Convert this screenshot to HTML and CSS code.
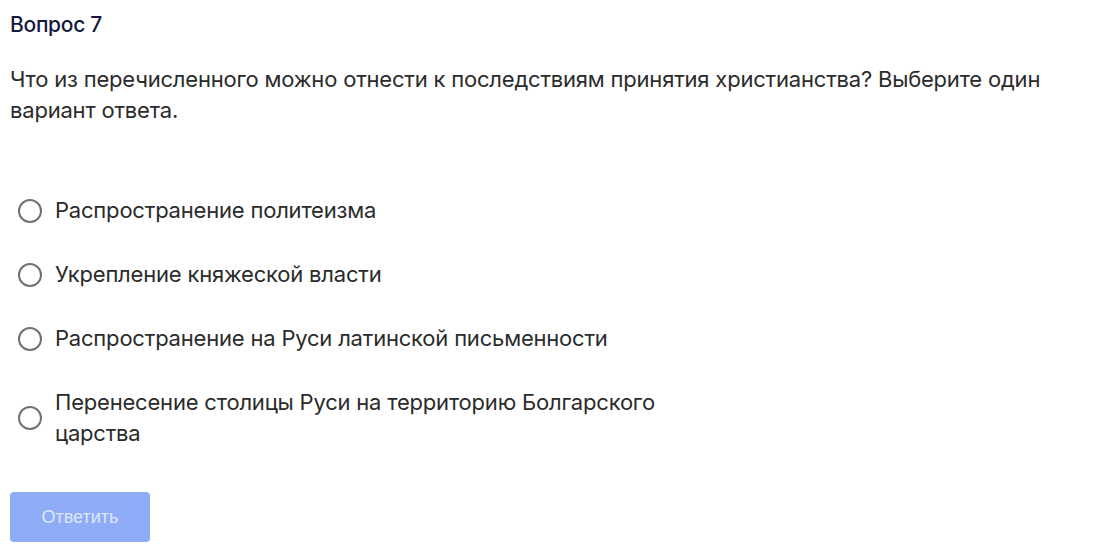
FILE: index.html
```html
<!DOCTYPE html>
<html lang="ru">
<head>
  <meta charset="UTF-8" />
  <title>Вопрос 7</title>
  <link rel="stylesheet" href="styles.css">
</head>
<body>
  <div class="quiz">
    <h3 class="quiz-title">Вопрос 7</h3>
    <p class="quiz-text">Что из перечисленного можно отнести к последствиям принятия христианства? Выберите один вариант ответа.</p>

    <form class="options">
      <label class="option">
        <input type="radio" name="answer" />
        <span class="radio"></span>
        <span class="option-text">Распространение политеизма</span>
      </label>
      <label class="option">
        <input type="radio" name="answer" />
        <span class="radio"></span>
        <span class="option-text">Укрепление княжеской власти</span>
      </label>
      <label class="option">
        <input type="radio" name="answer" />
        <span class="radio"></span>
        <span class="option-text">Распространение на Руси латинской письменности</span>
      </label>
      <label class="option">
        <input type="radio" name="answer" />
        <span class="radio"></span>
        <span class="option-text">Перенесение столицы Руси на территорию Болгарского царства</span>
      </label>
    </form>

    <button class="submit" disabled>Ответить</button>
  </div>
</body>
</html>
```

FILE: styles.css
```css
body {
  margin: 0;
  padding: 0;
  background: #fff;
  font-family: Inter, "Noto Sans", sans-serif;
  color: #2b2b2b;
}

.quiz {
  padding: 12px 10px;
}

.quiz-title {
  margin: 0;
  font-size: 21px;
  font-weight: 500;
  line-height: 26px;
  color: #15193a;
  letter-spacing: -0.3px;
}

.quiz-text {
  margin: 26px 0 0;
  font-size: 22px;
  line-height: 31px;
  letter-spacing: -0.2px;
  color: #2b2b2b;
}

.options {
  margin-top: 69px;
  display: flex;
  flex-direction: column;
  gap: 33px;
}

.option {
  display: flex;
  align-items: center;
  gap: 13px;
  padding-left: 8px;
  cursor: pointer;
}

.option input {
  display: none;
}

.radio {
  flex: none;
  width: 20px;
  height: 20px;
  border: 2px solid #727272;
  border-radius: 50%;
}

.option-text {
  max-width: 620px;
  font-size: 22px;
  line-height: 31px;
  letter-spacing: -0.2px;
}

.submit {
  display: block;
  margin-top: 43px;
  width: 140px;
  height: 50px;
  border: none;
  border-radius: 4px;
  background: #8fadf6;
  color: #dce6fc;
  font-family: "Liberation Sans", Arial, sans-serif;
  font-size: 18px;
}
```
